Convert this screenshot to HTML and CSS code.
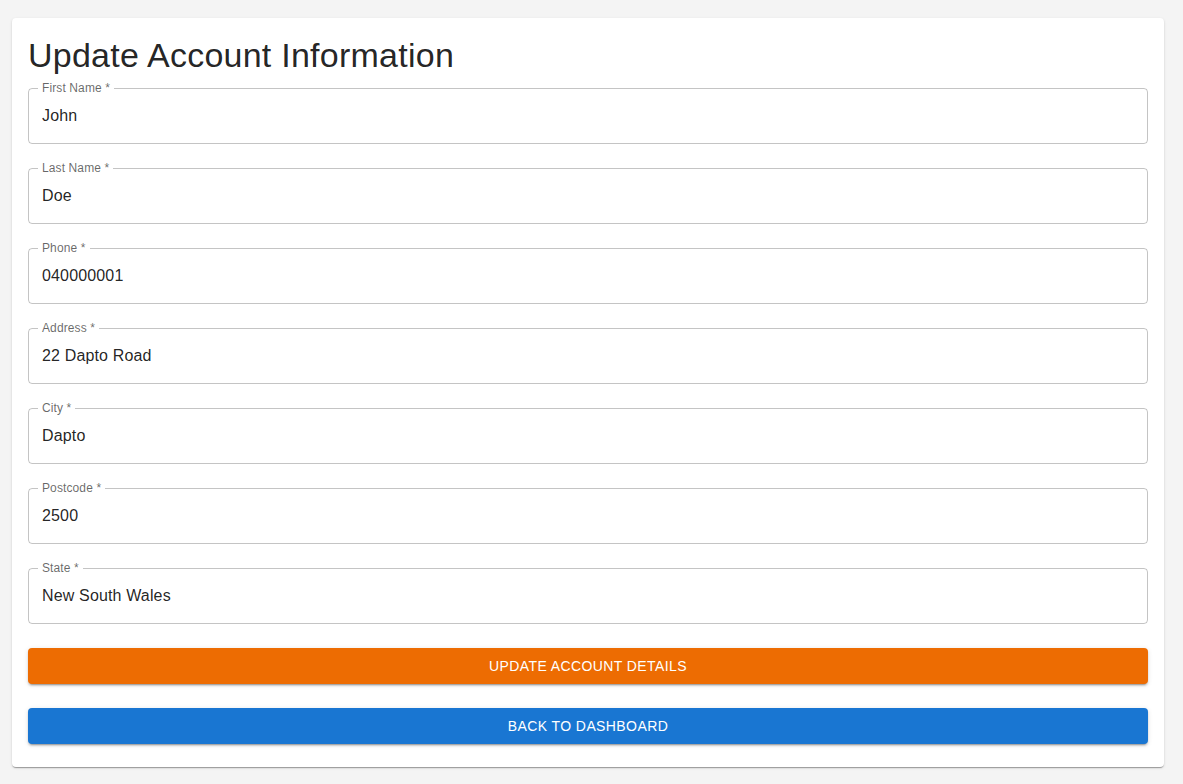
FILE: index.html
```html
<!DOCTYPE html>
<html lang="en">
<head>
<meta charset="utf-8">
<title>Update Account Information</title>
<link rel="stylesheet" href="styles.css">
</head>
<body>
<main class="card">
  <h1 class="title">Update Account Information</h1>
  <form class="form">
    <div class="field"><label class="label">First Name *</label><input class="input" value="John"></div>
    <div class="field"><label class="label">Last Name *</label><input class="input" value="Doe"></div>
    <div class="field"><label class="label">Phone *</label><input class="input" value="040000001"></div>
    <div class="field"><label class="label">Address *</label><input class="input" value="22 Dapto Road"></div>
    <div class="field"><label class="label">City *</label><input class="input" value="Dapto"></div>
    <div class="field"><label class="label">Postcode *</label><input class="input" value="2500"></div>
    <div class="field"><label class="label">State *</label><input class="input" value="New South Wales"></div>
    <button type="button" class="btn btn-orange">Update Account Details</button>
    <button type="button" class="btn btn-blue">Back to Dashboard</button>
  </form>
</main>
</body>
</html>
```
FILE: styles.css
```css
* { box-sizing: border-box; }
html, body { margin: 0; }
body {
  background: #f4f4f4;
  padding: 18px 19px 16px 12px;
  font-family: "Liberation Sans", Arial, sans-serif;
  color: rgba(0,0,0,0.87);
}
.card {
  background: #fff;
  border-radius: 4px;
  padding: 16px 16px 23px;
  box-shadow: 0 2px 1px -1px rgba(0,0,0,.2), 0 1px 1px 0 rgba(0,0,0,.14), 0 1px 3px 0 rgba(0,0,0,.12);
}
.title {
  margin: 0;
  font-size: 34px;
  font-weight: 400;
  line-height: 42px;
  letter-spacing: 0.00735em;
  color: rgba(0,0,0,0.87);
}
.form {
  display: flex;
  flex-direction: column;
  gap: 24px;
  padding-top: 12px;
}
.field {
  position: relative;
  height: 56px;
  border: 1px solid rgba(0,0,0,0.23);
  border-radius: 4px;
  display: flex;
  align-items: center;
}
.label {
  position: absolute;
  top: -7px;
  left: 9px;
  padding: 0 4px;
  background: #fff;
  font-size: 12px;
  line-height: 12px;
  color: rgba(0,0,0,0.6);
  letter-spacing: 0.00938em;
}
.input {
  border: 0;
  outline: 0;
  background: transparent;
  width: 100%;
  padding: 0 13px;
  font-family: inherit;
  font-size: 16px;
  letter-spacing: 0.00938em;
  color: rgba(0,0,0,0.87);
}
.btn {
  height: 36px;
  border: 0;
  border-radius: 4px;
  color: #fff;
  font-family: inherit;
  font-size: 14px;
  font-weight: 400;
  text-transform: uppercase;
  letter-spacing: 0.02857em;
  box-shadow: 0 3px 1px -2px rgba(0,0,0,.2), 0 2px 2px 0 rgba(0,0,0,.14), 0 1px 5px 0 rgba(0,0,0,.12);
}
.btn-orange { background: #ed6c02; }
.btn-blue { background: #1976d2; }
```
